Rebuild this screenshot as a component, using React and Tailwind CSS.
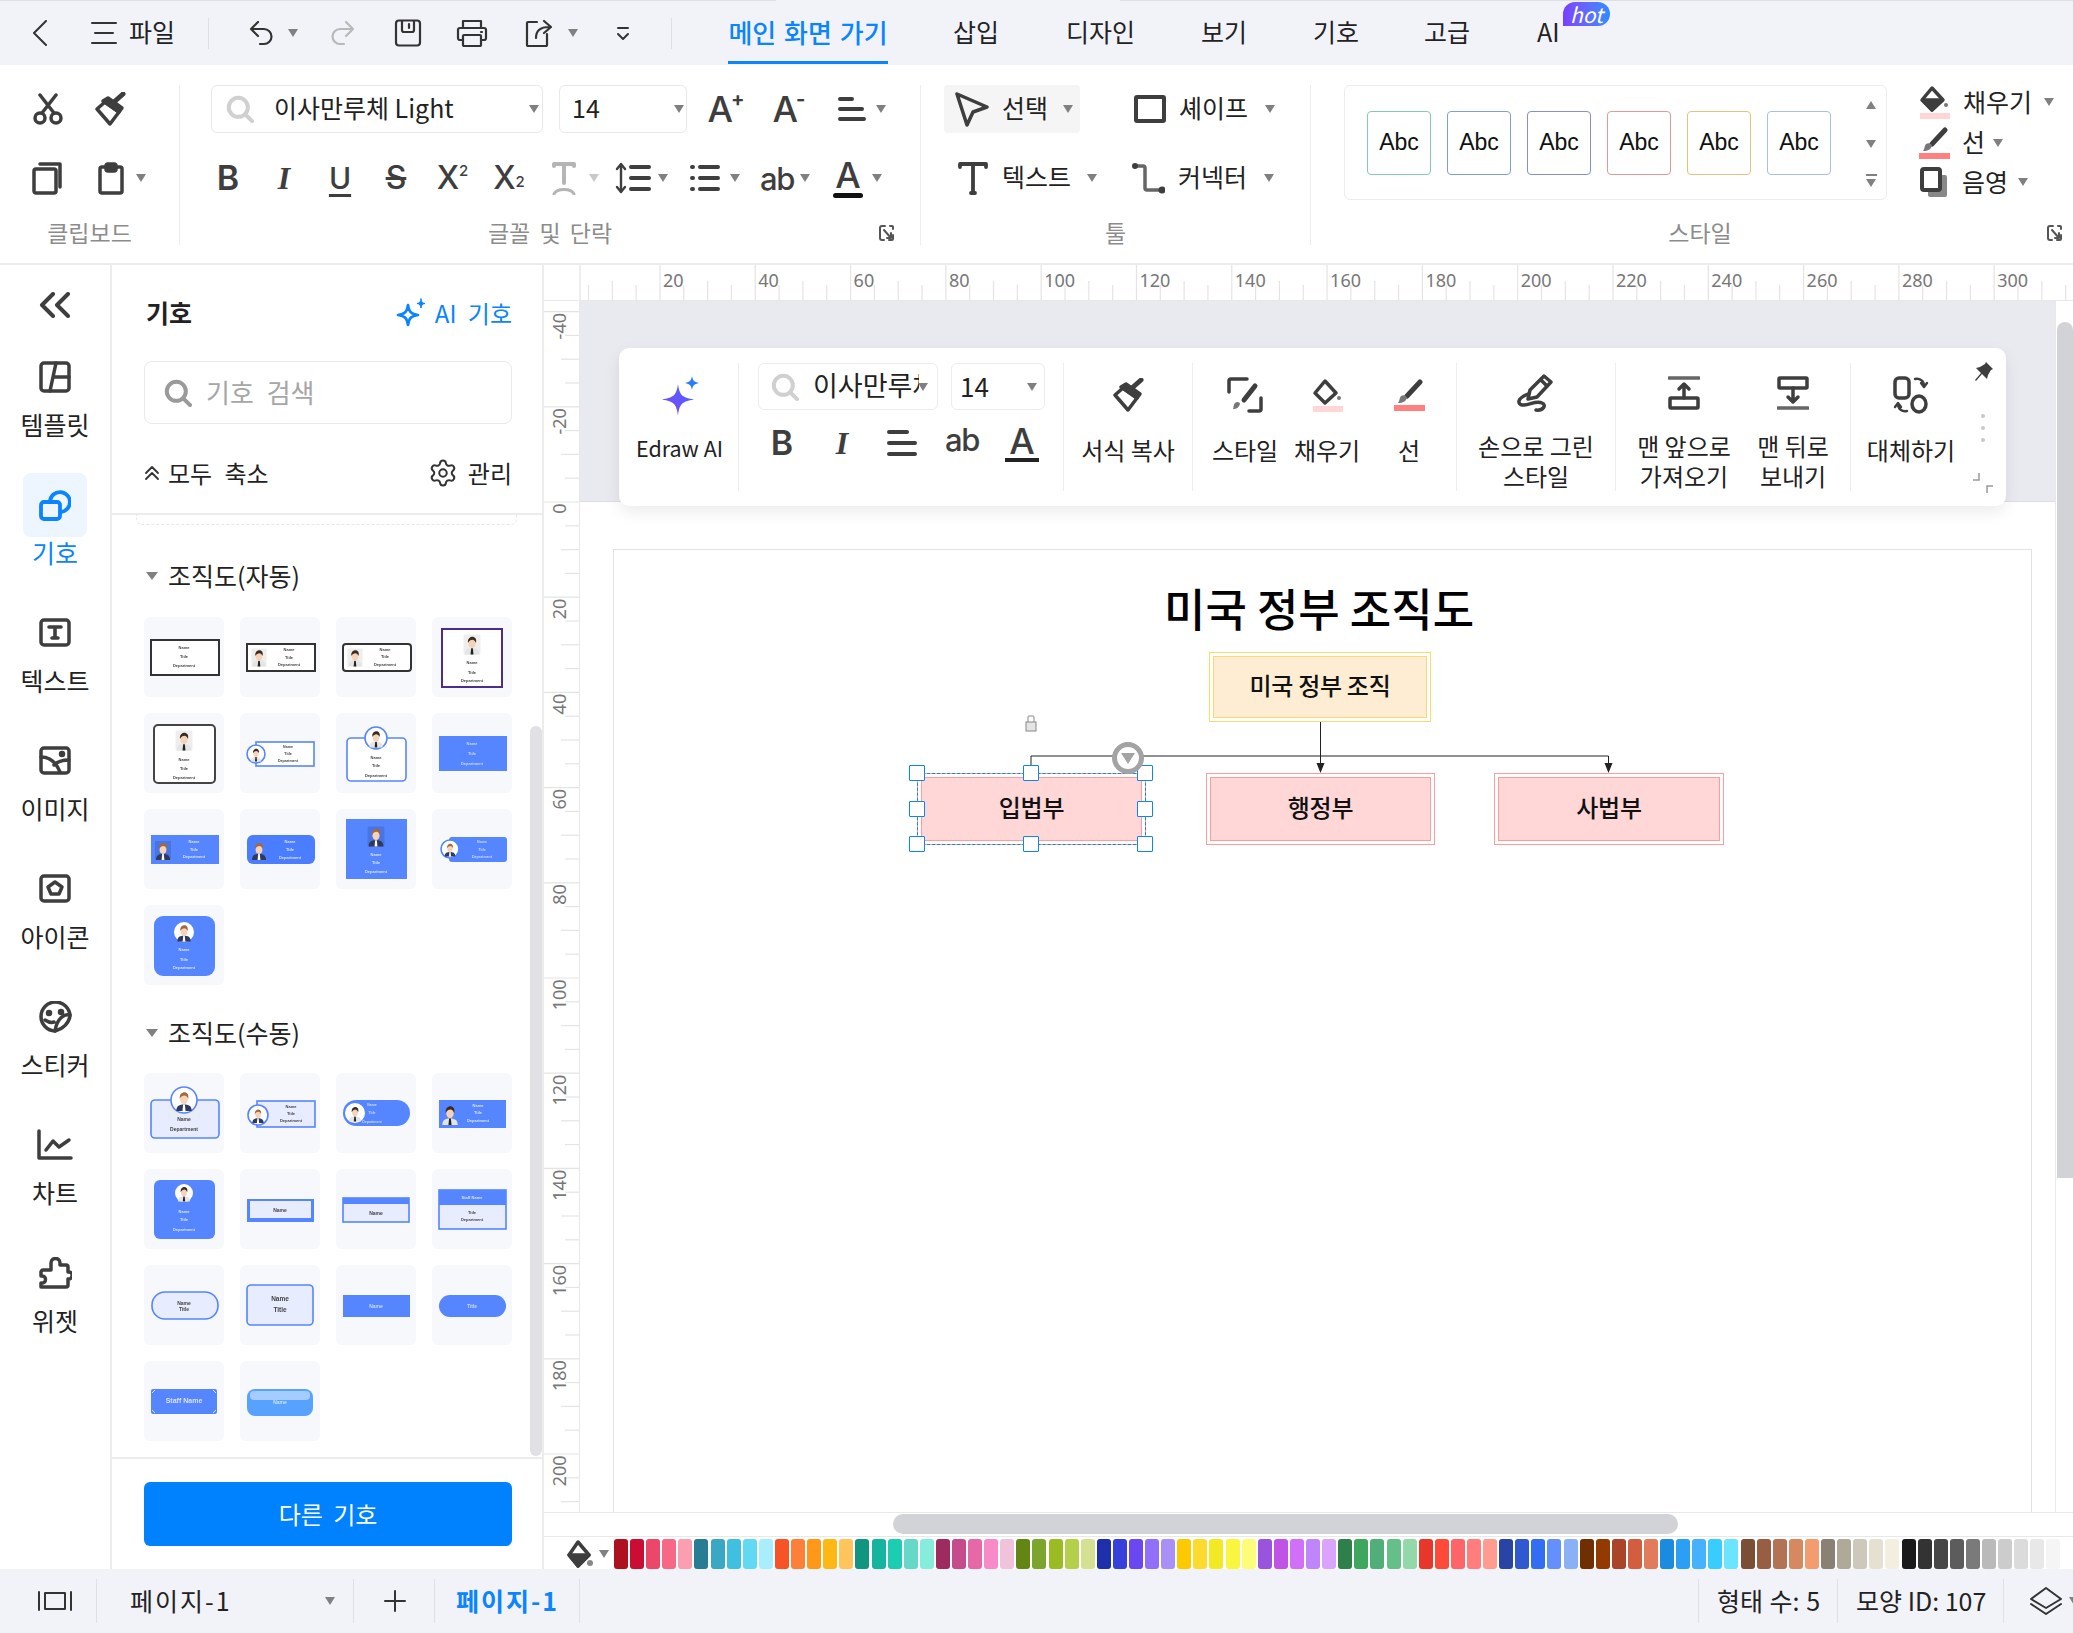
import React from 'react';
import { Settings } from 'lucide-react';

const Tri = ({ className = '' }) => (
  <span className={`block w-0 h-0 shrink-0 border-x-[5.5px] border-t-[8px] border-x-transparent border-t-[#808080] ${className}`}></span>
);

const Sep = ({ className = '' }) => <span className={`block w-px shrink-0 bg-[#dfe0e6] ${className}`}></span>;

const Ic = ({ w, h, sw = 3.5, stroke = '#3e3e3e', className = '', children }) => (
  <svg width={w} height={h} viewBox={`0 0 ${w} ${h}`} fill="none" stroke={stroke} strokeWidth={sw} strokeLinecap="round" strokeLinejoin="round" className={`shrink-0 ${className}`}>
    {children}
  </svg>
);

const Search = ({ size = 28, stroke = '#d0d0d0', sw = 4 }) => (
  <Ic w={size} h={size} sw={sw} stroke={stroke}>
    <circle cx={size * 0.44} cy={size * 0.44} r={size * 0.34} />
    <path d={`M${size * 0.68} ${size * 0.68}L${size * 0.93} ${size * 0.93}`} />
  </Ic>
);

const Launcher = ({ className = '' }) => (
  <Ic w={15} h={17} sw={2} stroke="#555" className={className}>
    <path d="M6 2H3a2 2 0 0 0-2 2v10a2 2 0 0 0 2 2h2M10 16h3a1 1 0 0 0 1-1v-4M14 5V3a1 1 0 0 0-1-1h-2M5 6l7 8M12 9v5H8" />
  </Ic>
);

const Painter = () => (
  <Ic w={34} h={34}>
    <path d="M12 10L26 20L17 32L4 17Z" />
    <path d="M10 9l16 11 3-4-14-10z" fill="#3e3e3e" />
    <path d="M21 10L30 2" strokeWidth="5" />
  </Ic>
);

const FillIcon = ({ bar = '#ffd5d5', hollow }) => (
  <Ic w={32} h={34}>
    <path d="M14 3L25 15L14 25L4 15Z" />
    {!hollow && <path d="M5 15h19L14 25Z" fill="#3e3e3e" />}
    <circle cx="28" cy="20" r="2" fill="#777" stroke="none" />
    <rect x="2" y="28" width="30" height="6" fill={bar} stroke="none" />
  </Ic>
);

const LineIcon = ({ bar = '#ff8080' }) => (
  <Ic w={32} h={32}>
    <path d="M27 3L14 17" strokeWidth="5" />
    <path d="M8 17c3-2 6 0 6 2-1 3-4 5-9 5 2-2 1-5 3-7z" fill="#777" stroke="none" />
    <rect x="1" y="26" width="31" height="6" fill={bar} stroke="none" />
  </Ic>
);

// little people used by the symbol thumbnails
const Person = ({ x, y, s = 1, hair = '#3a2a20', coat = '#e4e4e4', tie = '#222', bg, round }) => (
  <g transform={`translate(${x} ${y}) scale(${s})`}>
    {bg && !round && <rect x="-8" y="-9" width="16" height="19" fill={bg} />}
    <path d="M-7 10c0-5 3-6 7-6s7 1 7 6z" fill={coat} />
    <path d="M-.8 4h1.6l.6 6h-2.8z" fill={tie} />
    <ellipse cx="0" cy="-.5" rx="3.4" ry="4.4" fill="#f5d2b8" />
    <path d="M-3.8-1C-4.6-6-.5-7 0-7c3 0 4.6 2 3.8 6-1-2-2-3-3.5-3-1.6 0-3 1-4.1 3z" fill={hair} />
  </g>
);

const NameText = ({ x, ys, fill = '#444', size = 4, labels = ['Name', 'Title', 'Department'] }) => (
  <g fill={fill} fontSize={size} fontWeight="600" textAnchor="middle" fontFamily="'Liberation Sans', sans-serif">
    {ys.map((y, i) => (
      <text key={i} x={x} y={y + size * 0.35}>{labels[i]}</text>
    ))}
  </g>
);

const B = '#5585ff';
const L = '#e8ecff';
const W = '#ffffff';
const Lady = { hair: '#a5673c', coat: '#2f3a5c', tie: '#fff' };

const autoThumbs = [
  <>
    <rect x="7" y="23" width="68" height="35" fill={W} stroke="#333" strokeWidth="2" />
    <NameText x={40} ys={[31, 40, 49]} />
  </>,
  <>
    <rect x="7" y="27" width="68" height="27" fill={W} stroke="#333" strokeWidth="2" />
    <Person x={19} y={40} s={0.95} bg="#eee" />
    <NameText x={49} ys={[33, 41, 48]} />
  </>,
  <>
    <rect x="7" y="27" width="68" height="27" rx="3" fill={W} stroke="#333" strokeWidth="2" />
    <Person x={19} y={40} s={0.95} bg="#eee" />
    <NameText x={49} ys={[33, 40, 48]} />
  </>,
  <>
    <rect x="10" y="12" width="60" height="58" fill={W} stroke="#4b2e8c" strokeWidth="2" />
    <Person x={40} y={27} s={1.05} bg="#eee" />
    <NameText x={40} ys={[46, 56, 64]} />
  </>,
  <>
    <rect x="10" y="12" width="61" height="58" rx="4" fill={W} stroke="#444" strokeWidth="2" />
    <Person x={40} y={27} s={1.05} bg="#eee" />
    <NameText x={40} ys={[47, 56, 65]} />
  </>,
  <>
    <rect x="16" y="29" width="58" height="24" fill={W} stroke={B} strokeWidth="1.600" />
    <circle cx="16" cy="41" r="9" fill={W} stroke={B} strokeWidth="1.600" />
    <Person x={16} y={41} s={0.75} />
    <NameText x={48} ys={[34, 41, 48]} size={3.6} />
  </>,
  <>
    <rect x="11" y="25" width="59" height="43" rx="4" fill={W} stroke={B} strokeWidth="1.600" />
    <circle cx="40" cy="25" r="11" fill={W} stroke={B} strokeWidth="1.600" />
    <Person x={40} y={25} s={0.95} />
    <NameText x={40} ys={[45, 53, 63]} />
  </>,
  <>
    <rect x="7" y="23" width="68" height="35" fill={B} />
    <NameText x={40} ys={[31, 41, 51]} fill="#c9d8ff" />
  </>,
  <>
    <rect x="7" y="26" width="68" height="29" fill={B} />
    <Person x={19} y={41} s={1} bg="#4a74e0" {...Lady} />
    <NameText x={50} ys={[33, 41, 48]} fill="#d7e2ff" />
  </>,
  <>
    <rect x="7" y="26" width="68" height="29" rx="6" fill="#4a7dff" />
    <Person x={19} y={41} s={1} {...Lady} />
    <NameText x={50} ys={[33, 41, 49]} fill="#d7e2ff" />
  </>,
  <>
    <rect x="10" y="10" width="61" height="60" fill={B} />
    <Person x={40} y={27} s={1.05} bg="#4a74e0" {...Lady} />
    <NameText x={40} ys={[46, 54, 63]} fill="#d7e2ff" />
  </>,
  <>
    <rect x="17" y="28" width="58" height="25" rx="3" fill={B} />
    <circle cx="18" cy="40" r="9" fill={W} stroke={B} strokeWidth="1.600" />
    <Person x={18} y={40} s={0.75} {...Lady} />
    <NameText x={50} ys={[33, 41, 48]} size={3.6} fill="#c9d8ff" />
  </>,
  <>
    <rect x="10" y="11" width="61" height="60" rx="9" fill={B} />
    <circle cx="40" cy="27" r="10" fill={W} />
    <Person x={40} y={27} s={0.95} {...Lady} />
    <NameText x={40} ys={[45, 55, 63]} fill="#d7e2ff" />
  </>,
];

const manualThumbs = [
  <>
    <rect x="7" y="27" width="68" height="38" rx="4" fill={L} stroke={B} strokeWidth="1.600" />
    <circle cx="40" cy="27" r="13" fill={W} stroke={B} strokeWidth="1.600" />
    <Person x={40} y={27} s={1.1} {...Lady} />
    <NameText x={40} ys={[46, 56]} size={5} labels={['Name', 'Department']} />
  </>,
  <>
    <rect x="17" y="28" width="58" height="26" fill={L} stroke={B} strokeWidth="1.600" />
    <circle cx="18" cy="42" r="10" fill={W} stroke={B} strokeWidth="1.600" />
    <Person x={18} y={42} s={0.8} {...Lady} />
    <NameText x={51} ys={[34, 41, 48]} />
  </>,
  <>
    <rect x="7" y="27" width="67" height="26" rx="13" fill={B} />
    <circle cx="19" cy="40" r="10" fill={W} />
    <Person x={19} y={40} s={0.85} />
    <NameText x={36} ys={[32, 40, 49]} size={3.5} fill="#c9d8ff" />
  </>,
  <>
    <rect x="7" y="27" width="67" height="28" fill={B} />
    <Person x={18} y={41} s={1.1} />
    <NameText x={46} ys={[33, 40, 48]} fill="#d7e2ff" />
  </>,
  <>
    <rect x="10" y="11" width="61" height="59" rx="6" fill={B} />
    <circle cx="40" cy="24" r="9" fill={W} />
    <Person x={40} y={24} s={0.85} />
    <NameText x={40} ys={[43, 51, 61]} fill="#d7e2ff" />
  </>,
  <>
    <rect x="7" y="30" width="67" height="23" fill={B} />
    <rect x="10" y="32" width="61" height="17" fill={L} />
    <NameText x={40} ys={[41]} size={5} labels={['Name']} />
  </>,
  <>
    <rect x="7" y="29" width="66" height="24" fill={L} stroke={B} strokeWidth="1.600" />
    <rect x="7" y="29" width="66" height="6" fill={B} />
    <NameText x={40} ys={[44]} size={5} labels={['Name']} />
  </>,
  <>
    <rect x="7" y="21" width="67" height="39" fill={L} stroke={B} strokeWidth="1.600" />
    <rect x="7" y="21" width="67" height="15" fill={B} />
    <NameText x={40} ys={[29]} fill="#d7e2ff" labels={['Staff Name']} />
    <NameText x={40} ys={[44, 51]} labels={['Title', 'Department']} />
  </>,
  <>
    <rect x="8" y="27" width="66" height="27" rx="13" fill={L} stroke={B} strokeWidth="1.600" />
    <NameText x={40} ys={[38, 44]} size={5} labels={['Name', 'Title']} />
  </>,
  <>
    <rect x="7" y="20" width="66" height="40" rx="4" fill={L} stroke={B} strokeWidth="1.600" />
    <NameText x={40} ys={[34, 45]} size={6.5} labels={['Name', 'Title']} />
  </>,
  <>
    <rect x="7" y="30" width="67" height="22" fill={B} />
    <NameText x={40} ys={[41]} size={5} fill="#c9d8ff" labels={['Name']} />
  </>,
  <>
    <rect x="7" y="30" width="67" height="22" rx="11" fill={B} />
    <NameText x={40} ys={[41]} size={5} fill="#c9d8ff" labels={['Title']} />
  </>,
  <>
    <rect x="7" y="28" width="66" height="25" rx="2" fill={B} />
    <path d="M8 32l3-3M72 32l-3-3M8 49l3 3M72 49l-3 3" stroke="#d7e2ff" strokeWidth="1" />
    <NameText x={40} ys={[40]} size={7} fill="#d7e2ff" labels={['Staff Name']} />
  </>,
  <>
    <rect x="7" y="28" width="66" height="27" rx="8" fill="#57a2ff" />
    <rect x="10" y="30" width="60" height="9" rx="4" fill="#a5ccff" />
    <NameText x={40} ys={[41]} size={5} fill="#c9e0ff" labels={['Name']} />
  </>,
];

const ThumbGrid = ({ items, className = '' }) => (
  <div className={`grid grid-cols-[repeat(4,80px)] gap-4 ${className}`}>
    {items.map((t, i) => (
      <div key={i} className="w-20 h-20 rounded-[6px] bg-[#f7f8fc]">
        <svg width="80" height="80" viewBox="0 0 80 80" className="blur-[0.4px]">{t}</svg>
      </div>
    ))}
  </div>
);

const railItems = [
  {
    label: '템플릿',
    icon: (
      <Ic w={32} h={32}>
        <rect x="2" y="2" width="28" height="28" rx="3" />
        <path d="M17 2L11 30M15 16H30" />
      </Ic>
    ),
  },
  {
    label: '기호',
    active: true,
    icon: (
      <Ic w={32} h={32} stroke="#0a84ff" sw={3.8}>
        <path d="M2 16a3 3 0 0 1 3-3h13a3 3 0 0 1 3 3v11a3 3 0 0 1-3 3H5a3 3 0 0 1-3-3z" />
        <path d="M11 12a10 10 0 1 1 11 11" />
      </Ic>
    ),
  },
  {
    label: '텍스트',
    icon: (
      <Ic w={32} h={32}>
        <rect x="2" y="3" width="28" height="25" rx="3" />
        <path d="M10 10h12M16 10v11M13 21h6" strokeWidth="3.6" />
      </Ic>
    ),
  },
  {
    label: '이미지',
    icon: (
      <Ic w={32} h={32}>
        <rect x="2" y="3" width="28" height="25" rx="3" />
        <path d="M2 12c9 0 15 5 19 15M15 20c3-3 9-5 15-5" />
        <circle cx="23" cy="9" r="1.500" fill="#3e3e3e" />
      </Ic>
    ),
  },
  {
    label: '아이콘',
    icon: (
      <Ic w={32} h={32}>
        <rect x="2" y="3" width="28" height="25" rx="3" />
        <path d="M16 9l7 5-3 7h-8l-3-7z" />
      </Ic>
    ),
  },
  {
    label: '스티커',
    icon: (
      <Ic w={36} h={32}>
        <path d="M18 30A14.500 14.500 0 1 1 33 15C32 22 26 28 18 30Z" />
        <path d="M33 14c-6-1-13 3-15 16M8 19c3 2 6 3 9 2" />
        <circle cx="12" cy="12" r="1.500" fill="#3e3e3e" />
        <circle cx="24" cy="11" r="1.500" fill="#3e3e3e" />
      </Ic>
    ),
  },
  {
    label: '차트',
    icon: (
      <Ic w={36} h={32}>
        <path d="M2 2V29H34M9 21l7-9 6 6 10-7" />
      </Ic>
    ),
  },
  {
    label: '위젯',
    icon: (
      <Ic w={34} h={32}>
        <path d="M13 6c0-6 9-6 9 0v2h6a2 2 0 0 1 2 2v5c6-1 5 8 0 7v6a2 2 0 0 1-2 2H3v-4c6 1 6-8 0-7v-4c0-1 1-2 2-2h8z" />
      </Ic>
    ),
  },
];

const swatches = [
  '#ae1020', '#cb0c33', '#ec4768', '#f76887', '#fa9eb0',
  '#287d95', '#3aa8c5', '#40c0e0', '#62d9f2', '#a8eefc',
  '#f65426', '#fe7f37', '#ff9818', '#ffb813', '#ffc55c',
  '#109580', '#14b49f', '#1ccdb1', '#66d8c8', '#86ecdc',
  '#9d2b5f', '#c74b8c', '#e668a7', '#f98ac8', '#f0c2dc',
  '#638514', '#7ba52c', '#9abb21', '#b4cf4a', '#d4e193',
  '#1f2eab', '#3740db', '#6a47f1', '#926ff8', '#a990f6',
  '#fdc900', '#fdda2e', '#f3e824', '#faf53e', '#fdfd7a',
  '#9a53dd', '#c152e6', '#d26ff8', '#c085fb', '#dba4fc',
  '#2f7f4a', '#3ea65f', '#50ae78', '#64bf88', '#92d8a8',
  '#e8372a', '#ff4a3a', '#ff6468', '#ff7d7d', '#ff9b8f',
  '#2845a5', '#2f58d1', '#336df2', '#6490fd', '#8ab0f6',
  '#6f2f00', '#933a00', '#ab4328', '#d25e3f', '#e27a5c',
  '#1a8bdf', '#2b9ff5', '#45b1ff', '#38cdfe', '#6be4ff',
  '#7b4f36', '#975e43', '#b37254', '#d68960', '#f39c6f',
  '#8a8073', '#b1a998', '#cdc8b9', '#e6e0d1', '#f3eee0',
  '#1a1a1a', '#333333', '#474747', '#5c5c5c', '#7a7a7a',
  '#bababa', '#cccccc', '#dbdbdb', '#e8e8e8', '#f5f5f5',
  '#ffffff',
];

const TopBar = () => (
  <header className="shrink-0 bg-[#f1f3f9]">
    <div className="flex h-px">
      <span className="w-[776px] bg-[#dfe0e6]"></span>
      <span className="w-[344px]"></span>
      <span className="flex-1 bg-[#dfe0e6]"></span>
    </div>
    <div className="flex items-center h-[64px] text-[25px] text-[#222]">
      <Ic w={16} h={26} sw={2} stroke="#333" className="ml-[32px]"><path d="M14 1L2 13l12 12" /></Ic>
      <Ic w={26} h={24} sw={2} stroke="#333" className="ml-[43px]"><path d="M1 2h24M4 12h18M1 22h24" /></Ic>
      <span className="ml-[12px] w-[46px] pb-[2px] whitespace-nowrap">파일</span>
      <Sep className="ml-[33px] h-[31px]" />
      <Ic w={24} h={26} sw={2.2} stroke="#333" className="ml-[40px]"><path d="M9 2L2 9l7 7M2 9h13a7 7 0 0 1 0 15h-4" /></Ic>
      <Tri className="ml-[15px]" />
      <Ic w={24} h={26} sw={2.2} stroke="#b8b8b8" className="ml-[33px]"><path d="M15 2l7 7-7 7M22 9H9a7 7 0 0 0 0 15h4" /></Ic>
      <Ic w={28} h={28} sw={2.2} stroke="#333" className="ml-[39px]"><rect x="2" y="1.500" width="24" height="25" rx="3" /><path d="M8 2v9a2 2 0 0 0 2 2h8a2 2 0 0 0 2-2V2M15 5v4" /></Ic>
      <Ic w={32} h={28} sw={2.2} stroke="#333" className="ml-[34px]"><path d="M7 9V2h18v7M7 21H4a2 2 0 0 1-2-2v-8a2 2 0 0 1 2-2h24a2 2 0 0 1 2 2v8a2 2 0 0 1-2 2h-3" /><rect x="7" y="16" width="18" height="11" rx="1" /><path d="M25 13h1" /></Ic>
      <Ic w={28} h={28} sw={2.2} stroke="#333" className="ml-[37px]"><path d="M12 3H3a1 1 0 0 0-1 1v22a1 1 0 0 0 1 1h18a1 1 0 0 0 1-1V15" /><path d="M11 19c0-7 4-11 13-11M19 2l7 6-7 6" /></Ic>
      <Tri className="ml-[15px]" />
      <Ic w={14} h={15} sw={2} stroke="#333" className="ml-[38px]"><path d="M2 2h10M2 8l5 5 5-5" /></Ic>
      <Sep className="ml-[41px] h-[31px]" />
      <div className="ml-[56px] w-[160px] self-stretch flex items-center justify-center whitespace-nowrap border-b-[3px] border-[#0a84ff] mb-px text-[26px] font-medium [word-spacing:2px] text-[#0a84ff]">메인 화면 가기</div>
      <span className="ml-[65px] w-[47px] pb-[2px] whitespace-nowrap">삽입</span>
      <span className="ml-[66px] w-[69px] pb-[2px] whitespace-nowrap">디자인</span>
      <span className="ml-[66px] w-[44px] pb-[2px] whitespace-nowrap">보기</span>
      <span className="ml-[68px] w-[46px] pb-[2px] whitespace-nowrap">기호</span>
      <span className="ml-[65px] w-[47px] pb-[2px] whitespace-nowrap">고급</span>
      <span className="relative ml-[66px] w-[19px] pb-[2px]">
        AI
        <span className="absolute left-[26px] -top-[11px] w-[47px] h-[24px] flex items-center justify-center rounded-[12px] rounded-bl-none bg-linear-to-r from-[#7a3dff] to-[#2a8cff] text-[21px] italic leading-none text-white">hot</span>
      </span>
    </div>
  </header>
);

const GroupLabel = ({ className = '', children }) => (
  <span className={`block text-center whitespace-nowrap text-[23px] leading-[25px] text-[#8c8c8c] ${className}`}>{children}</span>
);

const Glyph = ({ className = '', children }) => (
  <span className={`flex items-center justify-center shrink-0 text-[#3e3e3e] leading-none ${className}`}>{children}</span>
);

const Ribbon = () => (
  <section className="flex shrink-0 h-[200px] border-b-2 border-[#ececec] bg-white text-[25px] text-[#222]">
    {/* 클립보드 */}
    <div className="w-[180px] h-[160px] mt-[20px] border-r border-[#ececec] flex flex-col">
      <div className="flex items-center h-[48px]">
        <Ic w={32} h={32} className="ml-[32px]">
          <circle cx="8" cy="25" r="5" />
          <circle cx="24" cy="25" r="5" />
          <path d="M10 20L24 2M22 20L8 2" />
        </Ic>
        <span className="ml-[29px]"><Painter /></span>
      </div>
      <div className="flex items-center h-[48px] mt-[21px]">
        <Ic w={32} h={34} className="ml-[32px]">
          <rect x="2" y="8" width="22" height="24" rx="2" />
          <path d="M8 3h20v23" />
        </Ic>
        <Ic w={32} h={34} className="ml-[32px]">
          <path d="M10 6H6a2 2 0 0 0-2 2v22a2 2 0 0 0 2 2h18a2 2 0 0 0 2-2V8a2 2 0 0 0-2-2h-4" />
          <rect x="10" y="3" width="10" height="7" rx="2" fill="#3e3e3e" />
        </Ic>
        <Tri className="ml-[8px]" />
      </div>
      <GroupLabel className="mt-[18px]">클립보드</GroupLabel>
    </div>

    {/* 글꼴 및 단락 */}
    <div className="w-[741px] h-[160px] mt-[20px] border-r border-[#ececec] flex flex-col">
      <div className="flex items-center h-[48px]">
        <div className="ml-[31px] w-[332px] h-[48px] flex items-center border border-[#e8e8e8] rounded-[6px]">
          <span className="ml-[14px]"><Search size={28} /></span>
          <span className="ml-[20px] pb-[2px] whitespace-nowrap">이사만루체 Light</span>
          <Tri className="ml-auto mr-[3px]" />
        </div>
        <div className="ml-[16px] w-[128px] h-[48px] flex items-center border border-[#e8e8e8] rounded-[6px]">
          <span className="ml-[12px] pb-[2px]">14</span>
          <Tri className="ml-auto mr-[2px]" />
        </div>
        <Glyph className="ml-[21px] w-[36px] text-[36px] font-medium font-['Inter',sans-serif]">A<sup className="text-[20px] font-bold -ml-[2px]">+</sup></Glyph>
        <Glyph className="ml-[27px] w-[36px] text-[36px] font-medium font-['Inter',sans-serif]">A<sup className="text-[20px] font-bold -ml-[2px]">-</sup></Glyph>
        <Ic w={28} h={26} sw={4} className="ml-[31px]"><path d="M2 3h12M2 13h22M2 23h24" /></Ic>
        <Tri className="ml-[10px]" />
      </div>
      <div className="flex items-center h-[48px] mt-[21px] ml-[20px]">
        <Glyph className="w-[56px] text-[34px] font-semibold font-['Inter',sans-serif]">B</Glyph>
        <Glyph className="w-[56px] text-[32px] italic font-bold font-['Liberation_Serif',serif]">I</Glyph>
        <Glyph className="w-[56px] text-[30px] font-medium underline underline-offset-[5px] font-['Inter',sans-serif]">U</Glyph>
        <Glyph className="w-[56px] text-[32px] font-medium line-through font-['Inter',sans-serif]">S</Glyph>
        <Glyph className="w-[57px] text-[32px] font-medium font-['Inter',sans-serif]">X<sup className="text-[15px]">2</sup></Glyph>
        <Glyph className="w-[56px] text-[32px] font-medium font-['Inter',sans-serif]">X<sub className="text-[15px]">2</sub></Glyph>
        <span className="w-[54px] flex justify-center">
          <Ic w={26} h={34} sw={4} stroke="#b5b5b5"><path d="M3 5V3h20v2M13 3v19" /><path d="M3 33c3-6 17-6 20 0" strokeWidth="3" /></Ic>
        </span>
        <Tri className="border-t-[#c8c8c8] -ml-[2px]" />
        <Ic w={36} h={34} sw={4} className="ml-[16px]">
          <path d="M16 6h18M16 17h18M16 28h18" />
          <path d="M6 4v26M2 8l4-5 4 5M2 26l4 5 4-5" strokeWidth="2.400" />
        </Ic>
        <Tri className="ml-[7px]" />
        <Ic w={30} h={30} sw={4} className="ml-[22px]"><path d="M2 4h1M10 4h18M2 15h1M10 15h18M2 26h1M10 26h18" /></Ic>
        <Tri className="ml-[10px]" />
        <Glyph className="ml-[19px] w-[36px] text-[31px] font-medium tracking-[-1.5px] font-['Inter',sans-serif]">ab</Glyph>
        <Tri className="ml-[5px]" />
        <div className="ml-[23px] w-[30px] flex flex-col items-center">
          <Glyph className="text-[36px] h-[33px] font-medium font-['Inter',sans-serif]">A</Glyph>
          <span className="w-[30px] h-[5px] rounded-full bg-[#111] mt-[1px]"></span>
        </div>
        <Tri className="ml-[9px]" />
      </div>
      <div className="flex items-center mt-[18px]">
        <GroupLabel className="ml-[304px] w-[132px] [word-spacing:4px]">글꼴 및 단락</GroupLabel>
        <Launcher className="ml-[263px]" />
      </div>
    </div>

    {/* 툴 */}
    <div className="w-[390px] h-[160px] mt-[20px] border-r border-[#ececec] flex flex-col">
      <div className="flex items-center h-[48px]">
        <div className="ml-[23px] w-[136px] h-[48px] rounded-[4px] bg-[#f5f5f5] flex items-center">
          <Ic w={36} h={36} className="ml-[10px]"><path d="M3 3L33 16 19 21 13 34Z" /></Ic>
          <span className="ml-[12px] w-[46px] pb-[2px] whitespace-nowrap">선택</span>
          <Tri className="ml-[15px]" />
        </div>
        <Ic w={32} h={28} sw={4} className="ml-[54px]"><rect x="2" y="2" width="28" height="24" rx="1" /></Ic>
        <span className="ml-[13px] w-[70px] pb-[2px] whitespace-nowrap">셰이프</span>
        <Tri className="ml-[16px]" />
      </div>
      <div className="flex items-center h-[48px] mt-[21px]">
        <Ic w={32} h={34} sw={3.8} className="ml-[36px]"><path d="M3 6V3h26v3M16 3v28M14 32h4" /></Ic>
        <span className="ml-[13px] w-[69px] pb-[2px] whitespace-nowrap">텍스트</span>
        <Tri className="ml-[16px]" />
        <Ic w={34} h={32} stroke="#666" className="ml-[34px]">
          <path d="M5 4h7a2 2 0 0 1 2 2v20a2 2 0 0 0 2 2h13" />
          <circle cx="4" cy="4" r="3" fill="#3e3e3e" stroke="none" />
          <circle cx="31" cy="28" r="3.500" fill="#3e3e3e" stroke="none" />
        </Ic>
        <span className="ml-[13px] w-[70px] pb-[2px] whitespace-nowrap">커넥터</span>
        <Tri className="ml-[16px]" />
      </div>
      <GroupLabel className="mt-[18px]">툴</GroupLabel>
    </div>

    {/* 스타일 */}
    <div className="flex-1 h-[160px] mt-[20px] flex flex-col">
      <div className="flex h-[115px]">
        <div className="ml-[33px] w-[543px] h-[115px] flex items-center border border-[#ececec] rounded-[6px] font-['Liberation_Sans',sans-serif] text-[23px] text-[#111]">
          <span className="ml-[22px] w-[64px] h-[64px] flex items-center justify-center rounded-[4px] border border-[#86c8b6]">Abc</span>
          <span className="ml-[16px] w-[64px] h-[64px] flex items-center justify-center rounded-[4px] border border-[#7f9fd9]">Abc</span>
          <span className="ml-[16px] w-[64px] h-[64px] flex items-center justify-center rounded-[4px] border border-[#8490d0]">Abc</span>
          <span className="ml-[16px] w-[64px] h-[64px] flex items-center justify-center rounded-[4px] border border-[#e09a9a]">Abc</span>
          <span className="ml-[16px] w-[64px] h-[64px] flex items-center justify-center rounded-[4px] border border-[#e6c27a]">Abc</span>
          <span className="ml-[16px] w-[64px] h-[64px] flex items-center justify-center rounded-[4px] border border-[#a9c0e0]">Abc</span>
          <div className="ml-[34px] w-[12px] h-[115px] flex flex-col items-center pt-[16px]">
            <Tri className="rotate-180" />
            <Tri className="mt-[31px]" />
            <span className="w-[11px] h-[2px] bg-[#808080] mt-[26px]"></span>
            <Tri className="mt-[3px]" />
          </div>
        </div>
        <div className="ml-[31px] flex flex-col">
          <div className="flex items-center h-[36px] -mt-[1px]">
            <FillIcon />
            <span className="ml-[13px] w-[68px] whitespace-nowrap">채우기</span>
            <Tri className="ml-[13px]" />
          </div>
          <div className="flex items-center h-[36px] mt-[5px]">
            <LineIcon />
            <span className="ml-[12px] w-[22px] pb-[2px] whitespace-nowrap">선</span>
            <Tri className="ml-[9px]" />
          </div>
          <div className="flex items-center h-[36px] mt-[3px]">
            <Ic w={32} h={32} sw={4} className="ml-[1px]">
              <rect x="9" y="9" width="19" height="22" rx="2" fill="#888" stroke="none" />
              <rect x="3" y="3" width="18" height="21" rx="2" fill="#fff" />
            </Ic>
            <span className="ml-[11px] w-[46px] whitespace-nowrap">음영</span>
            <Tri className="ml-[10px]" />
          </div>
        </div>
      </div>
      <div className="flex items-center mt-[20px]">
        <GroupLabel className="ml-[356px] w-[66px]">스타일</GroupLabel>
        <Launcher className="ml-[314px]" />
      </div>
    </div>
  </section>
);

const Rail = () => (
  <aside className="w-[112px] shrink-0 border-r-2 border-[#ececec] flex flex-col items-center text-[25px] text-[#222]">
    <div className="h-[80px] flex items-center justify-center">
      <Ic w={34} h={26} sw={4}><path d="M15 2L4 13l11 11M30 2L19 13l11 11" /></Ic>
    </div>
    {railItems.map((item) => (
      <div key={item.label} className="h-[128px] flex flex-col items-center">
        <span className={`w-[64px] h-[64px] rounded-[8px] flex items-center justify-center ${item.active ? 'bg-[#edf5ff]' : ''}`}>{item.icon}</span>
        <span className={`h-[32px] leading-[30px] whitespace-nowrap ${item.active ? 'text-[#0a84ff]' : ''}`}>{item.label}</span>
      </div>
    ))}
  </aside>
);

const SectionHead = ({ className = '', children }) => (
  <div className={`flex items-center h-[40px] text-[25px] text-[#222] ${className}`}>
    <Tri className="ml-[2px] border-x-[6px]" />
    <span className="ml-[10px] whitespace-nowrap">{children}</span>
  </div>
);

const SymbolPanel = () => (
  <div className="w-[432px] shrink-0 border-r-2 border-[#ececec] flex flex-col text-[#222]">
    <div className="h-[96px] pl-[34px] pr-[30px] flex items-center justify-between">
      <span className="text-[25px] font-bold">기호</span>
      <span className="flex items-center text-[24px] text-[#0a84ff] whitespace-nowrap [word-spacing:6px]">
        <Ic w={32} h={32} sw={2.6} stroke="#0a84ff" className="mr-[8px]">
          <path d="M13 8c1 7 3 9 10 10-7 1-9 3-10 10-1-7-3-9-10-10 7-1 9-3 10-10z" />
          <path d="M26 2c.5 3 1 4 4 4.500-3 .5-3.500 1.500-4 4.500-.5-3-1-4-4-4.500 3-.5 3.500-1.500 4-4.500z" fill="#0a84ff" strokeWidth="1" />
        </Ic>
        AI 기호
      </span>
    </div>
    <div className="ml-[32px] mr-[30px] h-[63px] flex items-center border border-[#e8e8e8] rounded-[8px] text-[26px] text-[#a6a6a6]">
      <span className="ml-[19px]"><Search size={28} stroke="#9a9a9a" /></span>
      <span className="ml-[14px] pb-[2px] whitespace-nowrap [word-spacing:7px]">기호 검색</span>
    </div>
    <div className="mt-[17px] h-[64px] pl-[32px] pr-[30px] flex items-center justify-between text-[24px] shrink-0">
      <span className="flex items-center whitespace-nowrap [word-spacing:7px]">
        <Ic w={16} h={16} sw={1.8} stroke="#333" className="mr-[8px]"><path d="M2 8l6-6 6 6M2 14l6-6 6 6" /></Ic>
        모두 축소
      </span>
      <span className="flex items-center whitespace-nowrap">
        <Settings size={30} strokeWidth={1.6} color="#333" className="mr-[10px]" />
        관리
      </span>
    </div>
    <div className="relative flex-1 min-h-0 mt-[8px] border-t-2 border-[#ececec] pl-[32px] overflow-hidden">
      <div className="-ml-[8px] w-[381px] h-[10px] rounded-b-[6px] border-x border-b border-dashed border-[#e8e8e8]"></div>
      <SectionHead className="mt-[31px]">조직도(자동)</SectionHead>
      <ThumbGrid items={autoThumbs} className="mt-[21px]" />
      <SectionHead className="mt-[28px]">조직도(수동)</SectionHead>
      <ThumbGrid items={manualThumbs} className="mt-[20px]" />
      <span className="absolute left-[418px] top-[211px] w-[12px] h-[730px] rounded-full bg-[#e0e0e5]"></span>
    </div>
    <div className="shrink-0 h-[112px] border-t-2 border-[#ececec] pl-[32px] pr-[30px] pt-[23px]">
      <div className="h-[64px] rounded-[6px] bg-[#0082ff] flex items-center justify-center text-[24px] text-white [word-spacing:5px]">다른 기호</div>
    </div>
  </div>
);

const hTicks = Array.from({ length: 65 }, (_, i) => 44.5 + i * 23.825);
const vTicks = Array.from({ length: 51 }, (_, i) => 10.6 + i * 23.8);

const TopRuler = () => (
  <svg width="1529" height="36" className="block shrink-0">
    <path d="M36 0V36" stroke="#e8e8e8" strokeWidth="1.5" />
    {hTicks.map((x, i) => (
      <line key={i} x1={x} x2={x} y1={i % 4 === 3 ? 0 : i % 2 === 1 ? 16 : 20} y2="36" stroke="#e4e4e4" strokeWidth="1.2" />
    ))}
    {Array.from({ length: 15 }, (_, i) => (
      <text key={i} x={119 + i * 95.3} y="22" fontSize="18" fill="#777" fontFamily="'Noto Sans', sans-serif">{20 + i * 20}</text>
    ))}
    <line x1="0" x2="1529" y1="35.500" y2="35.500" stroke="#e8e8e8" />
  </svg>
);

const SideRuler = () => {
  const numbers = [];
  for (let i = 0; i < 13; i++) numbers.push(-40 + i * 20);
  return (
    <svg width="36" height="1211" className="block shrink-0">
      {vTicks.map((y, i) => (
        <line key={i} x1={i % 4 === 0 ? 0 : i % 2 === 0 ? 17 : 21} x2="36" y1={y} y2={y} stroke="#e4e4e4" strokeWidth="1.2" />
      ))}
      {numbers.map((n, i) => (
        <text key={n} transform={`translate(22 ${12 + i * 95.2}) rotate(-90)`} textAnchor="end" fontSize="18" fill="#777" fontFamily="'Noto Sans', sans-serif">{n}</text>
      ))}
      <line x1="35.500" x2="35.500" y1="0" y2="1211" stroke="#e8e8e8" />
    </svg>
  );
};

const ToolLabel = ({ children }) => (
  <span className="mt-[8px] block text-center text-[24px] leading-[30px] whitespace-pre-line">{children}</span>
);

const ToolIcon = ({ children }) => <span className="h-[64px] flex items-center justify-center">{children}</span>;

const FloatingBar = () => (
  <div className="absolute left-[39px] top-[47px] w-[1387px] h-[158px] pt-[15px] bg-white rounded-[10px] shadow-[0_6px_16px_rgba(0,0,0,0.08)] flex text-[#222]">
    {/* Edraw AI */}
    <div className="w-[120px] h-[128px] border-r border-[#ececec] flex flex-col items-center pl-[2px]">
      <span className="h-[68px] flex items-center justify-center">
        <svg width="44" height="44" viewBox="0 0 44 44">
          <defs>
            <linearGradient id="aiStar" x1="0" y1="1" x2="1" y2="0">
              <stop offset="0" stopColor="#8b3dff" />
              <stop offset="1" stopColor="#3f6dff" />
            </linearGradient>
          </defs>
          <path d="M20 9c1.500 11 4 13.500 16 15.500-12 2-14.500 4.500-16 16-1.500-11.500-4-14-16-16 12-2 14.500-4.500 16-15.500z" fill="url(#aiStar)" />
          <path d="M34 1c.8 4.500 2 6 7 7-5 1-6.200 2.500-7 7-.8-4.500-2-6-7-7 5-1 6.200-2.500 7-7z" fill="#2b7bff" />
        </svg>
      </span>
      <span className="mt-[2px] text-[21.500px] leading-[30px] whitespace-nowrap">Edraw AI</span>
    </div>
    {/* font */}
    <div className="w-[325px] h-[128px] border-r border-[#ececec]">
      <div className="flex items-center">
        <div className="ml-[19px] w-[180px] h-[47px] flex items-center border border-[#ececec] rounded-[6px] text-[27px]">
          <span className="ml-[12px]"><Search size={28} /></span>
          <span className="ml-[14px] w-[106px] overflow-hidden whitespace-nowrap pb-[3px]">이사만루체 Light</span>
          <Tri className="-ml-[1px]" />
        </div>
        <div className="ml-[13px] w-[94px] h-[47px] flex items-center border border-[#ececec] rounded-[6px] text-[26px]">
          <span className="ml-[8px] pb-[3px]">14</span>
          <Tri className="ml-auto mr-[7px]" />
        </div>
      </div>
      <div className="flex items-center h-[40px] mt-[13px] ml-[13px]">
        <Glyph className="w-[60px] text-[34px] font-semibold font-['Inter',sans-serif]">B</Glyph>
        <Glyph className="w-[60px] text-[32px] italic font-bold font-['Liberation_Serif',serif]">I</Glyph>
        <span className="w-[60px] flex justify-center">
          <Ic w={30} h={28} sw={4}><path d="M2 3h18M2 14h26M2 25h26" /></Ic>
        </span>
        <Glyph className="w-[60px] text-[31px] font-medium tracking-[-1.5px] font-['Inter',sans-serif] -mt-[8px]">ab</Glyph>
        <div className="w-[60px] flex flex-col items-center">
          <Glyph className="text-[36px] h-[34px] font-medium font-['Inter',sans-serif]">A</Glyph>
          <span className="w-[34px] h-[4px] bg-[#222]"></span>
        </div>
      </div>
    </div>
    {/* format painter */}
    <div className="w-[129px] h-[128px] border-r border-[#ececec] flex flex-col items-center">
      <ToolIcon><Painter /></ToolIcon>
      <ToolLabel>서식 복사</ToolLabel>
    </div>
    {/* style */}
    <div className="w-[264px] h-[128px] border-r border-[#ececec] flex pl-[11px]">
      <div className="w-[82px] flex flex-col items-center">
        <ToolIcon>
          <Ic w={36} h={36}>
            <path d="M2 15V4a2 2 0 0 1 2-2h16M34 21v11a2 2 0 0 1-2 2H22" />
            <path d="M28 9L17 23" strokeWidth="5" />
            <path d="M8 26c2-2 5-1 5 1-1 3-3 5-7 5 1-2 0-4 2-6z" fill="#777" stroke="none" />
          </Ic>
        </ToolIcon>
        <ToolLabel>스타일</ToolLabel>
      </div>
      <div className="w-[82px] flex flex-col items-center">
        <ToolIcon><FillIcon hollow /></ToolIcon>
        <ToolLabel>채우기</ToolLabel>
      </div>
      <div className="w-[82px] flex flex-col items-center">
        <ToolIcon><LineIcon /></ToolIcon>
        <ToolLabel>선</ToolLabel>
      </div>
    </div>
    {/* hand drawn */}
    <div className="w-[159px] h-[128px] border-r border-[#ececec] flex flex-col items-center">
      <ToolIcon>
        <Ic w={40} h={38}>
          <path d="M28 2l7 6-14 15-9 2 2-9z" />
          <path d="M25 6l6 6" />
          <path d="M12 20c-12 5-10 10-6 11 6 1 14-5 20-2 5 2 1 8-6 7" />
        </Ic>
      </ToolIcon>
      <ToolLabel>{'손으로 그린\n스타일'}</ToolLabel>
    </div>
    {/* order */}
    <div className="w-[235px] h-[128px] border-r border-[#ececec] flex pl-[12px]">
      <div className="w-[112px] flex flex-col items-center">
        <ToolIcon>
          <Ic w={32} h={34}>
            <path d="M1 2h30" stroke="#666" />
            <path d="M16 22V9M11 13l5-5 5 5" />
            <rect x="2" y="22" width="28" height="10" rx="1" />
          </Ic>
        </ToolIcon>
        <ToolLabel>{'맨 앞으로\n가져오기'}</ToolLabel>
      </div>
      <div className="w-[106px] flex flex-col items-center">
        <ToolIcon>
          <Ic w={32} h={34}>
            <rect x="2" y="2" width="28" height="10" rx="1" />
            <path d="M16 12v13M11 21l5 5 5-5" />
            <path d="M1 32h30" stroke="#666" />
          </Ic>
        </ToolIcon>
        <ToolLabel>{'맨 뒤로\n보내기'}</ToolLabel>
      </div>
    </div>
    {/* replace + pin */}
    <div className="w-[120px] h-[128px] flex flex-col items-center">
      <ToolIcon>
        <Ic w={36} h={38}>
          <rect x="2" y="2" width="14" height="20" rx="4" />
          <ellipse cx="26" cy="28" rx="7" ry="8" />
          <path d="M22 3c5-1 9 2 9 7M28 7l3 4 3-4" strokeWidth="2.400" />
          <path d="M14 35c-5 1-9-2-9-7M2 31l3-4 3 4" strokeWidth="2.400" />
        </Ic>
      </ToolIcon>
      <ToolLabel>대체하기</ToolLabel>
    </div>
    <div className="w-[24px] flex flex-col items-center -mt-[2px]">
      <svg width="22" height="22" viewBox="0 0 22 22">
        <path d="M14 1l7 7-2 1-3 5-1 4-5-5-6 7-1-1 6-7-5-5 4-1 5-3z" fill="#3e3e3e" />
      </svg>
      <span className="mt-[31px] w-[4px] h-[4px] rounded-full bg-[#c8c8c8]"></span>
      <span className="mt-[8px] w-[4px] h-[4px] rounded-full bg-[#c8c8c8]"></span>
      <span className="mt-[8px] w-[4px] h-[4px] rounded-full bg-[#c8c8c8]"></span>
      <svg width="24" height="22" viewBox="0 0 24 22" fill="none" stroke="#999" strokeWidth="1.500" className="mt-[30px]">
        <path d="M2 8h6V1M22 14h-6v7" />
      </svg>
    </div>
  </div>
);

const OrgBox = ({ className = '', outer = 'border-[#ff9b9b]', inner = 'border-[#ff9b9b] bg-[#ffd7d7]', children }) => (
  <div className={`absolute p-[3px] border bg-white flex ${outer} ${className}`}>
    <div className={`flex-1 border pb-[5px] flex items-center justify-center text-[24px] font-medium tracking-[-0.3px] text-[#111] ${inner}`}>{children}</div>
  </div>
);

const handles = [
  'left-[329px] top-[464px]', 'left-[443px] top-[464px]', 'left-[557px] top-[464px]',
  'left-[329px] top-[500px]', 'left-[557px] top-[500px]',
  'left-[329px] top-[535px]', 'left-[443px] top-[535px]', 'left-[557px] top-[535px]',
];

const Canvas = () => (
  <div className="relative flex-1 min-w-0 flex flex-col bg-white overflow-hidden">
    <div className="h-[201px] shrink-0 bg-[#e9e9f0] border-b border-[#dcdce2]"></div>
    <div className="ml-[33px] mt-[47px] w-[1419px] flex-1 border-x border-t border-[#e2e2e2]"></div>

    <FloatingBar />

    <div className="absolute left-[584px] top-[278px] w-[304px] text-center text-[45px] leading-[58px] font-medium whitespace-nowrap text-black">미국 정부 조직도</div>
    <OrgBox className="left-[629px] top-[351px] w-[222px] h-[70px]" outer="border-[#ffd76f]" inner="border-[#ffd76f] bg-[#ffedd3]">미국 정부 조직</OrgBox>
    <OrgBox className="left-[337px] top-[472px] w-[229px] h-[72px]">입법부</OrgBox>
    <OrgBox className="left-[626px] top-[472px] w-[229px] h-[72px]">행정부</OrgBox>
    <OrgBox className="left-[914px] top-[472px] w-[230px] h-[72px]">사법부</OrgBox>

    {/* connectors */}
    <svg width="600" height="60" className="absolute left-[440px] top-[420px]" fill="none" stroke="#222" strokeWidth="1">
      <path d="M11 35V52M11 35H588.500V48M300.500 1V48" />
      <path d="M296.500 42h8l-4 10zM584.500 42h8l-4 10z" fill="#222" stroke="none" />
    </svg>

    {/* selection */}
    <div className="absolute left-[337px] top-[472px] w-[229px] h-[72px] border border-dashed border-[#0a84ff]"></div>
    {handles.map((pos) => (
      <span key={pos} className={`absolute w-[16px] h-[16px] bg-white border-[1.5px] border-[#0a84ff] rounded-[1px] ${pos}`}></span>
    ))}
    <svg width="12" height="17" viewBox="0 0 12 17" className="absolute left-[445px] top-[414px]" fill="none" stroke="#888" strokeWidth="1">
      <path d="M3 7V2a1 1 0 0 1 1-1h4a1 1 0 0 1 1 1v5" />
      <rect x="1" y="7" width="10" height="9" fill="#e4e4e4" />
    </svg>
    <span className="absolute left-[532px] top-[441px] w-[32px] h-[32px] rounded-full bg-white border-[5px] border-[#a3a3a3] flex items-center justify-center">
      <span className="block w-0 h-0 border-x-[7px] border-t-[11px] border-x-transparent border-t-[#a3a3a3]"></span>
    </span>
  </div>
);

const FillIconSmall = () => (
  <Ic w={28} h={30}>
    <path d="M12 3L23 16 12 27 3 16Z" />
    <path d="M3 16h20L12 27Z" fill="#3e3e3e" />
    <circle cx="24" cy="24" r="3" fill="#888" stroke="none" />
  </Ic>
);

const Workspace = () => (
  <div className="flex-1 min-w-0 flex flex-col">
    <TopRuler />
    <div className="flex h-[1211px] shrink-0">
      <SideRuler />
      <Canvas />
      <div className="w-[18px] shrink-0 border-l border-[#e8e8e8] pl-[1px]">
        <span className="block mt-[21px] w-[16px] h-[856px] rounded-t-[8px] bg-[#d2d3d6]"></span>
      </div>
    </div>
    <div className="h-[25px] shrink-0 border-y border-[#e8e8e8] pl-[349px] pt-[1px]">
      <span className="block w-[785px] h-[20px] rounded-full bg-[#d2d3d6]"></span>
    </div>
    <div className="flex-1 flex items-start overflow-hidden">
      <div className="w-[70px] shrink-0 flex items-center pl-[22px] pt-[2px]">
        <FillIconSmall />
        <Tri className="ml-[5px]" />
      </div>
      <div className="flex gap-[2.1px] pt-[2px]">
        {swatches.map((c, i) => (
          <span key={i} className="block w-[14px] h-[30px] rounded-[3px]" style={{ backgroundColor: c }}></span>
        ))}
      </div>
    </div>
  </div>
);

const Footer = () => (
  <footer className="shrink-0 h-[64px] bg-[#f1f3f9] flex items-center text-[25px] text-[#222]">
    <Ic w={34} h={20} sw={2} stroke="#333" className="ml-[38px]">
      <path d="M1 1v18M33 1v18" />
      <rect x="7" y="2" width="20" height="16" />
    </Ic>
    <Sep className="ml-[24px] h-[44px]" />
    <span className="ml-[33px] w-[100px] tracking-[2px] whitespace-nowrap">페이지-1</span>
    <Tri className="ml-[95px]" />
    <Sep className="ml-[18px] h-[44px]" />
    <Ic w={22} h={22} sw={2} stroke="#333" className="ml-[30px]"><path d="M11 1v20M1 11h20" /></Ic>
    <Sep className="ml-[28px] h-[44px]" />
    <span className="ml-[21px] w-[101px] tracking-[2px] font-bold text-[#0a84ff] whitespace-nowrap">페이지-1</span>
    <Sep className="ml-[22px] h-[44px]" />
    <Sep className="ml-[1118px] h-[44px]" />
    <span className="ml-[18px] w-[104px] whitespace-nowrap [word-spacing:1px]">형태 수: 5</span>
    <Sep className="ml-[17px] h-[44px]" />
    <span className="ml-[18px] w-[130px] whitespace-nowrap">모양 ID: 107</span>
    <Sep className="ml-[17px] h-[44px]" />
    <Ic w={34} h={30} sw={2} stroke="#333" className="ml-[25px]">
      <path d="M17 2l15 11-15 9-15-9z" />
      <path d="M2 18l15 10 15-10" />
    </Ic>
    <Tri className="ml-[6px]" />
  </footer>
);

const App = () => (
  <div className="w-[2073px] h-[1633px] flex flex-col overflow-hidden bg-white font-['Noto_Sans_CJK_KR','Noto_Sans',sans-serif]">
    <TopBar />
    <Ribbon />
    <div className="flex flex-1 min-h-0">
      <Rail />
      <SymbolPanel />
      <Workspace />
    </div>
    <Footer />
  </div>
);

export default App;
